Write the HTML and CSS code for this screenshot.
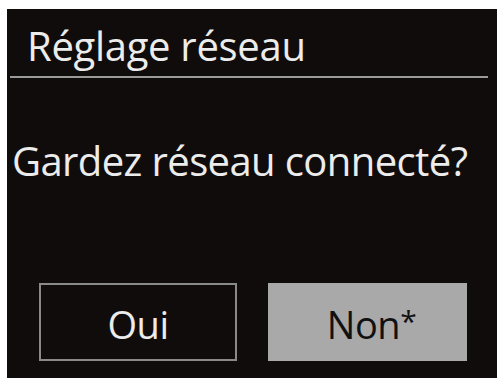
FILE: index.html
```html
<!DOCTYPE html>
<html lang="fr">
<head>
<meta charset="utf-8">
<link rel="stylesheet" href="styles.css">
</head>
<body>
<div class="screen">
  <div class="title">Réglage réseau</div>
  <div class="rule"></div>
  <div class="question">Gardez réseau connecté?</div>
  <div class="buttons">
    <div class="btn btn-off">Oui</div>
    <div class="btn btn-on">Non<span class="star">*</span></div>
  </div>
</div>
</body>
</html>
```
FILE: styles.css
```css
html, body {
  margin: 0;
  padding: 0;
  background: #ffffff;
}
body {
  width: 498px;
  height: 382px;
  overflow: hidden;
  font-family: "Open Sans", "DejaVu Sans", sans-serif;
}
.screen {
  margin: 9px 1px 0 7px;
  width: 490px;
  height: 369px;
  background: #0f0c0b;
  display: flex;
  flex-direction: column;
  box-sizing: border-box;
}
.title {
  color: #ececec;
  font-size: 40px;
  line-height: 44px;
  padding: 15px 0 0 20px;
  height: 52px;
  letter-spacing: -0.3px;
}
.rule {
  height: 2px;
  background: #9a9a9a;
  margin: 0 9px 0 3px;
}
.question {
  color: #ececec;
  font-size: 40px;
  line-height: 44px;
  padding: 61px 0 0 5px;
  letter-spacing: -0.6px;
  white-space: nowrap;
}
.buttons {
  display: flex;
  gap: 31px;
  margin: 100px 0 0 32px;
}
.btn {
  width: 198px;
  height: 78px;
  box-sizing: border-box;
  display: flex;
  align-items: center;
  justify-content: center;
  font-size: 38px;
  padding-top: 4px;
  letter-spacing: -0.5px;
}
.btn-off {
  border: 2px solid #8a8a8a;
  color: #ececec;
}
.btn-on {
  background: #a9a9a9;
  color: #111111;
  width: 199px;
  padding-left: 8px;
}
.star {
  font-size: 30px;
  align-self: flex-start;
  margin-top: 13px;
}
```
